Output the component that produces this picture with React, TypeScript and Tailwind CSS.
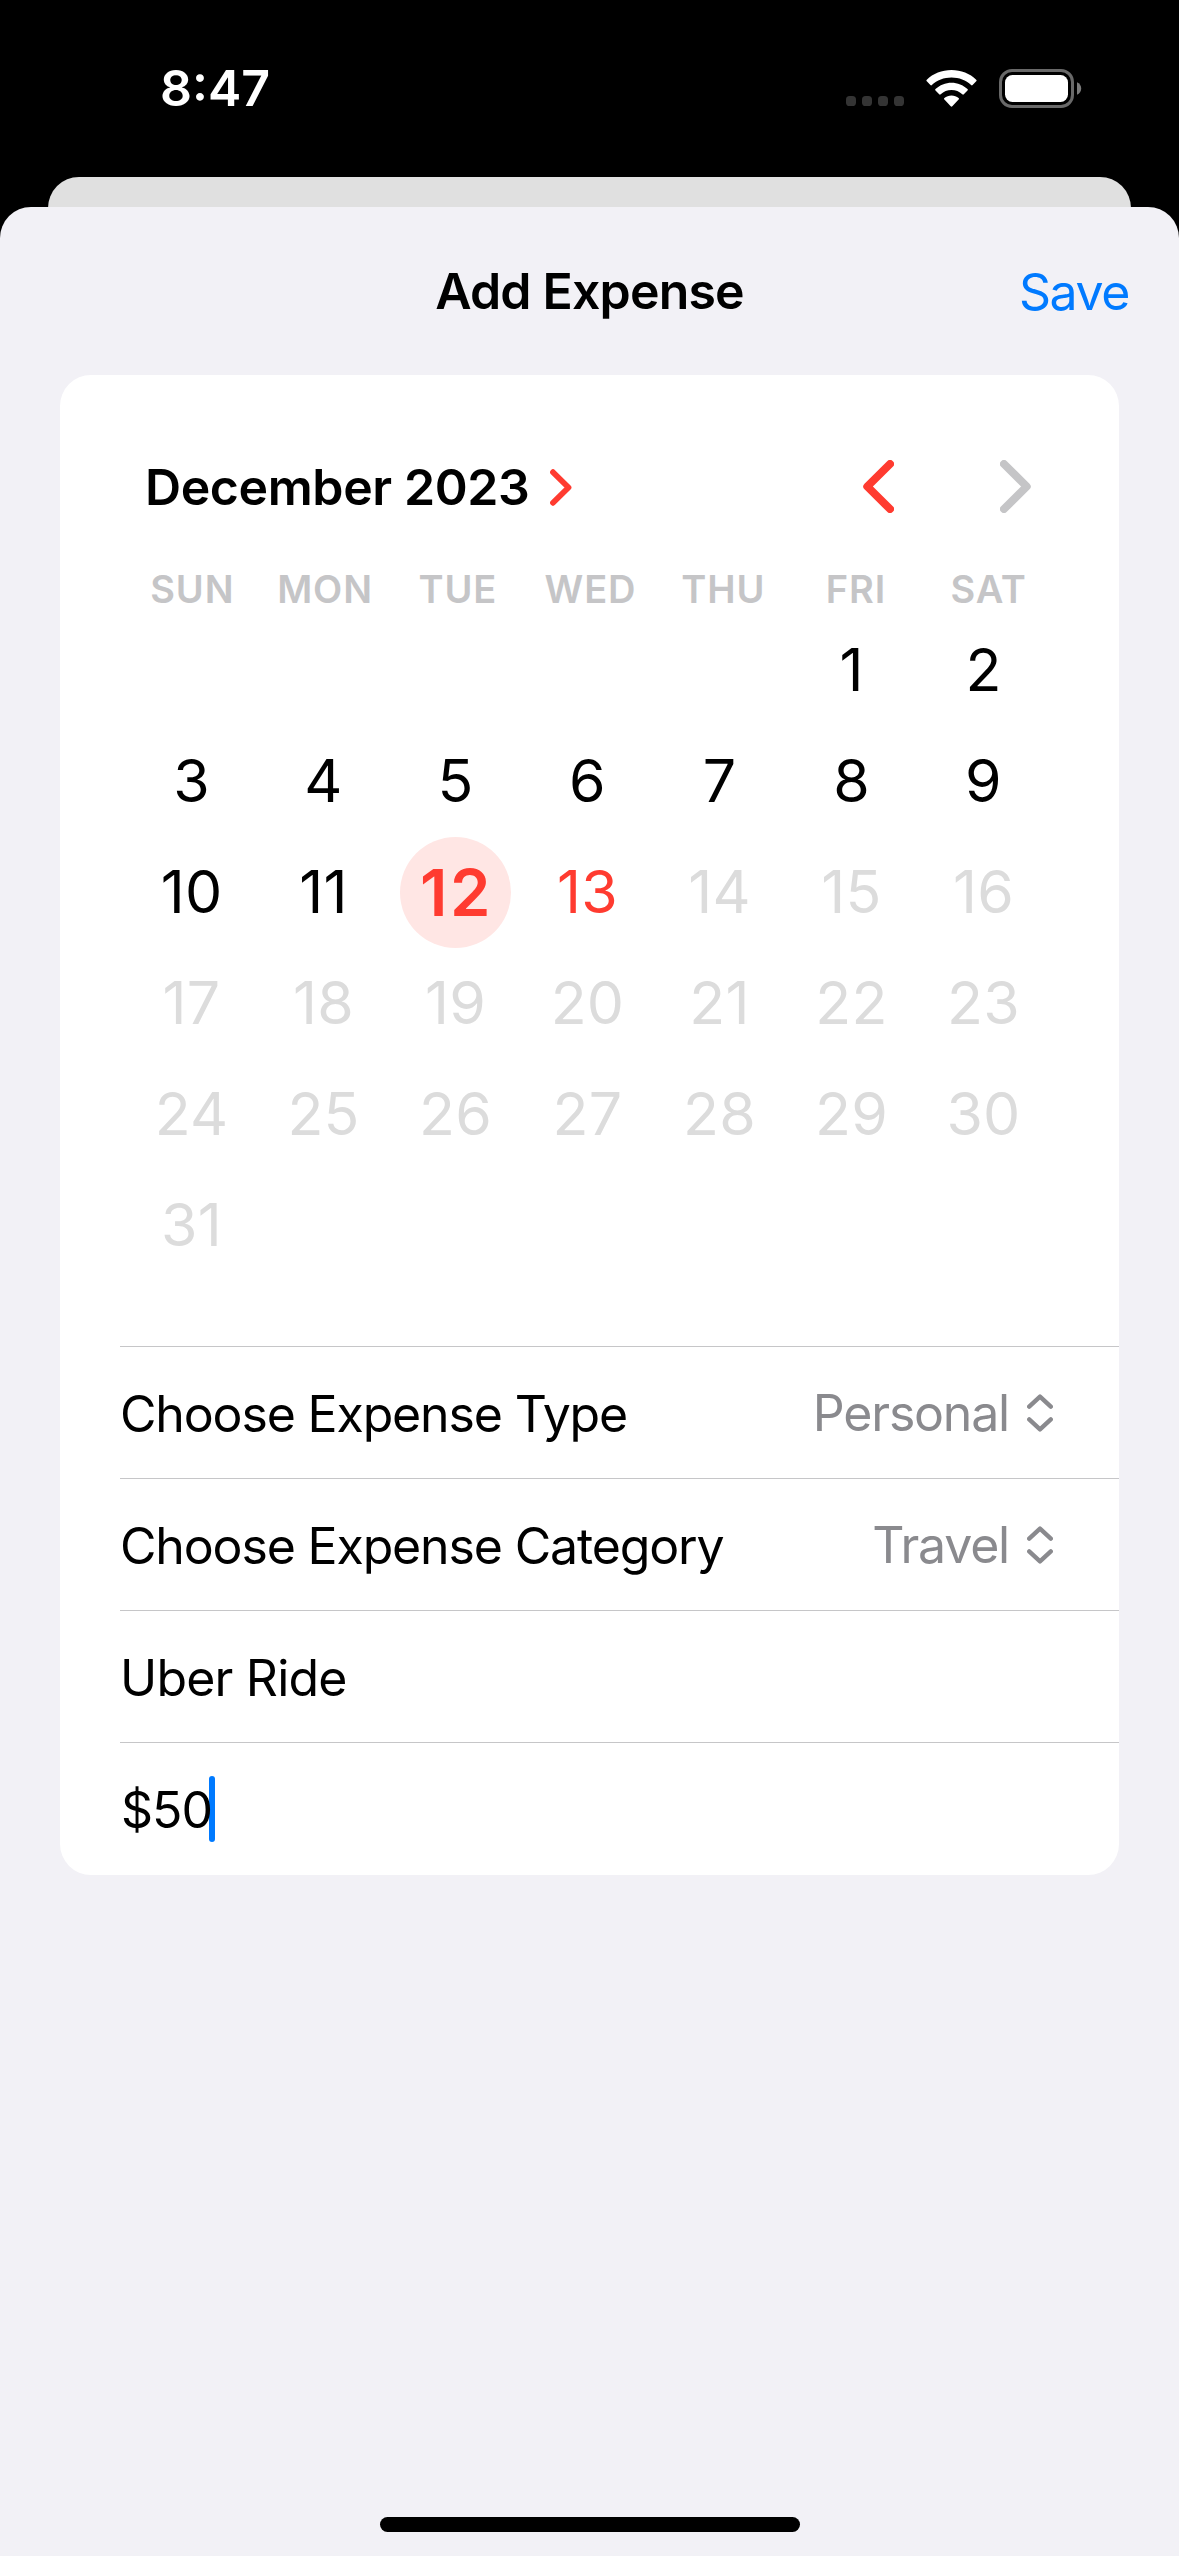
import React from 'react';

const weekdays = ['SUN', 'MON', 'TUE', 'WED', 'THU', 'FRI', 'SAT'];
const leadingBlanks = 5;
const daysInMonth = 31;
const selectedDay = 12;
const today = 13;

function SignalDots() {
  return (
    <svg width="58" height="10" viewBox="0 0 58 10" className="mt-[26px] fill-[#343434]">
      <rect x="0" width="10" height="10" rx="3.6" />
      <rect x="16" width="10" height="10" rx="3.6" />
      <rect x="32" width="10" height="10" rx="3.6" />
      <rect x="48" width="10" height="10" rx="3.6" />
    </svg>
  );
}

function WifiIcon() {
  return (
    <svg width="51" height="37" viewBox="0 0 51 37" className="ml-[22px] fill-white">
      <path d="M25.5 0C16 0 7 3.6 .8 9.7a1 1 0 0 0 0 1.5L4.4 15a1 1 0 0 0 1.5 0C11 10.2 18 7.5 25.5 7.5S40 10.2 45.1 15a1 1 0 0 0 1.5 0L50.2 11.2a1 1 0 0 0 0-1.5C44 3.6 35 0 25.5 0Z" />
      <path d="M25.5 12.7c-6 0-11.7 2.3-16 6.3a1 1 0 0 0 0 1.5l3.7 3.8a1 1 0 0 0 1.5 0c2.9-2.7 6.7-4.2 10.8-4.2s7.9 1.5 10.8 4.2a1 1 0 0 0 1.5 0l3.7-3.8a1 1 0 0 0 0-1.5c-4.3-4-10-6.3-16-6.3Z" />
      <path d="M25.5 25.4c-2.7 0-5.2 1-7.1 2.7a1 1 0 0 0 0 1.5l6.3 6.7a1.1 1.1 0 0 0 1.6 0l6.3-6.7a1 1 0 0 0 0-1.5c-1.9-1.7-4.4-2.7-7.1-2.7Z" />
    </svg>
  );
}

function BatteryIcon() {
  return (
    <svg width="83" height="39" viewBox="0 0 83 39" className="ml-[22px]">
      <rect x="1.5" y="1.5" width="72" height="36" rx="11.5" fill="none" stroke="#696969" strokeWidth="3" />
      <rect x="6" y="6" width="63" height="27" rx="7.5" fill="#fff" />
      <path d="M78 13.2c2.6 1.1 4.2 3.5 4.2 6.3s-1.6 5.2-4.2 6.3Z" fill="#7b7b7b" />
    </svg>
  );
}

function LargeChevron({ className, points }: { className: string; points: string }) {
  return (
    <svg width="31" height="53" viewBox="0 0 31 53" className={className}>
      <polyline points={points} fill="none" strokeWidth="8" strokeLinecap="round" strokeLinejoin="round" />
    </svg>
  );
}

function UpDownIcon() {
  return (
    <svg
      width="26"
      height="38"
      viewBox="0 0 26 38"
      className="fill-none stroke-[#8a8a8e]"
      strokeWidth="4.4"
      strokeLinecap="round"
      strokeLinejoin="round"
    >
      <polyline points="2.2,12.6 13,2.6 23.8,12.6" />
      <polyline points="2.2,25.4 13,35.4 23.8,25.4" />
    </svg>
  );
}

function Day({ day }: { day: number }) {
  if (day === selectedDay) {
    return (
      <div className="flex size-[111px] items-center justify-center rounded-full bg-[#ffe6e4] pl-[2px] text-[65px] font-semibold tracking-[2.5px] text-[#ff3b30]">
        {day}
      </div>
    );
  }
  const color = day === today ? 'text-[#ff3b30]' : day > today ? 'text-[#dcdcdc]' : 'text-black';
  return <div className={`pb-[2px] text-[59px] tracking-[0.2px] ${color}`}>{day}</div>;
}

function PickerRow({ label, value }: { label: string; value: string }) {
  return (
    <div className="ml-[60px] flex h-[132px] items-center border-t border-[#c6c6c8] pr-[66px]">
      <span className="pt-[2px] tracking-[-1.15px]">{label}</span>
      <span className="mr-[18px] ml-auto tracking-[-1.2px] text-[#8a8a8e]">{value}</span>
      <UpDownIcon />
    </div>
  );
}

export default function App() {
  return (
    <div className="flex h-[2556px] w-[1179px] flex-col overflow-hidden bg-black font-['Inter',sans-serif] leading-none text-black">
      <div className="flex h-[177px] shrink-0 items-center pr-[97px] pb-px pl-[160px] text-white">
        <span className="mr-auto text-[50px] font-semibold">8:47</span>
        <SignalDots />
        <WifiIcon />
        <BatteryIcon />
      </div>
      <div className="mx-[48px] h-[80px] shrink-0 rounded-t-[31px] bg-[#e0e0e0]" />
      <main className="relative -mt-[50px] flex flex-1 flex-col items-stretch rounded-t-[31px] bg-[#f2f1f6]">
        <header className="grid h-[168px] shrink-0 grid-cols-[1fr_auto_1fr] items-center">
          <span />
          <h1 className="text-[50px] font-semibold tracking-[-0.82px]">Add Expense</h1>
          <button className="justify-self-end pt-[2px] pr-[50px] text-[50px] tracking-[-1.4px] text-[#007aff]">Save</button>
        </header>

        <section className="mx-[60px] flex h-[1500px] shrink-0 flex-col rounded-[31px] bg-white pt-[37px] text-[50px]">
          <div className="flex h-[150px] items-center pr-[88px] pl-[85px]">
            <span className="text-[50px] font-semibold tracking-[-0.41px]">December 2023</span>
            <svg width="22" height="37" viewBox="0 0 22 37" className="ml-[21px]">
              <polyline
                points="3,3.2 18.5,18.5 3,33.8"
                fill="none"
                stroke="#ff3b30"
                strokeWidth="5.8"
                strokeLinecap="round"
                strokeLinejoin="round"
              />
            </svg>
            <LargeChevron className="mb-px ml-auto stroke-[#ff3b30]" points="27,4 4.3,26.5 27,49" />
            <LargeChevron className="mb-px ml-[106px] stroke-[#c5c5c7]" points="4,4 26.7,26.5 4,49" />
          </div>

          <div className="ml-[66px] grid h-[53px] w-[929px] grid-cols-7 place-items-center text-[38px] font-semibold tracking-[0.9px] text-[#c5c5c7]">
            {weekdays.map((name) => (
              <span key={name}>{name}</span>
            ))}
          </div>

          <div className="mb-[65px] ml-[65.5px] grid w-[924px] auto-rows-[111px] grid-cols-7 place-items-center">
            {Array.from({ length: leadingBlanks }, (_, i) => (
              <span key={`blank-${i}`} />
            ))}
            {Array.from({ length: daysInMonth }, (_, i) => (
              <Day key={i} day={i + 1} />
            ))}
          </div>

          <PickerRow label="Choose Expense Type" value="Personal" />
          <PickerRow label="Choose Expense Category" value="Travel" />
          <div className="ml-[60px] flex h-[132px] items-center border-t border-[#c6c6c8]">
            <span className="pt-[2px] tracking-[-0.8px]">Uber Ride</span>
          </div>
          <div className="ml-[60px] flex h-[133px] items-center border-t border-[#c6c6c8] pl-px">
            <span className="relative z-10 pt-[2px] tracking-[-1px]">$50</span>
            <span className="-ml-[3px] h-[66px] w-[6px] rounded-full bg-[#007aff]" />
          </div>
        </section>

        <div className="mt-auto mb-[24px] h-[15px] w-[420px] self-center rounded-full bg-black" />
      </main>
    </div>
  );
}
